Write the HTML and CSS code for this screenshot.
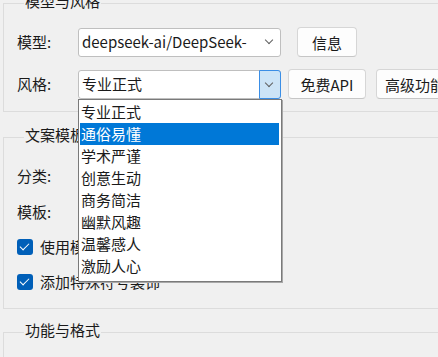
FILE: index.html
```html
<!DOCTYPE html>
<html lang="zh-CN">
    <head>
        <meta name="viewport" content="width=device-width, initial-scale=1">
        <link rel="stylesheet" href="styles.css">
        <title>文案生成</title>
    </head>
    <body>
        <div class="window">
            <fieldset class="group group-model">
                <legend>模型与风格</legend>
                <div class="row">
                    <label class="field-label">模型:</label>
                    <div class="combo">
                        <span class="combo-text">deepseek-ai/DeepSeek-</span>
                        <span class="combo-arrow"></span>
                    </div>
                    <button class="btn btn-info">信息</button>
                </div>
                <div class="row">
                    <label class="field-label">风格:</label>
                    <div class="combo combo-open">
                        <span class="combo-text">专业正式</span>
                        <span class="combo-arrow"></span>
                        <ul class="popup">
                            <li>专业正式</li>
                            <li class="selected">通俗易懂</li>
                            <li>学术严谨</li>
                            <li>创意生动</li>
                            <li>商务简洁</li>
                            <li>幽默风趣</li>
                            <li>温馨感人</li>
                            <li>激励人心</li>
                        </ul>
                    </div>
                    <button class="btn btn-api">免费API</button>
                    <button class="btn btn-more">高级功能</button>
                </div>
            </fieldset>

            <fieldset class="group group-template">
                <legend>文案模板</legend>
                <div class="row">
                    <label class="field-label">分类:</label>
                </div>
                <div class="row">
                    <label class="field-label">模板:</label>
                </div>
                <div class="row check-row">
                    <span class="checkbox"></span>
                    <span class="check-text">使用模板</span>
                </div>
                <div class="row check-row">
                    <span class="checkbox"></span>
                    <span class="check-text">添加特殊符号装饰</span>
                </div>
            </fieldset>

            <fieldset class="group group-format">
                <legend>功能与格式</legend>
                <div class="row"></div>
            </fieldset>
        </div>
    </body>
</html>
```

FILE: styles.css
```css
html, body {
    margin: 0;
    padding: 0;
    background: #f0f0f0;
    overflow: hidden;
}

body {
    color: #1a1a1a;
    font-family: "Noto Sans CJK SC", "Noto Sans", sans-serif;
    font-size: 15px;
    line-height: 20px;
}

.window {
    padding: 0 0 0 3px;
    width: 480px;
}

.group {
    border: 1px solid #dcdcdc;
    margin: 0;
    padding: 11px 0 0 13px;
    min-width: 0;
}

.group legend {
    margin-left: 7px;
    padding: 0 1px 5px;
    line-height: 20px;
}

.group-model {
    margin-top: -9px;
    padding-bottom: 12px;
}

.group-template {
    margin-top: 13px;
    padding-bottom: 11px;
}

.group-format {
    margin-top: 11px;
    height: 60px;
}

.row {
    display: flex;
    align-items: center;
    height: 30px;
}

.row + .row {
    margin-top: 12px;
}

.group-template .row + .row {
    margin-top: 6px;
}

.group-template .check-row + .check-row,
.group-template .row + .check-row {
    margin-top: 5px;
}

.field-label {
    width: 61px;
    flex: none;
}

.combo {
    position: relative;
    box-sizing: border-box;
    width: 203px;
    height: 29px;
    background: #fff;
    border: 1px solid #bfbfbf;
    border-radius: 3px;
    display: flex;
    align-items: center;
    flex: none;
}

.combo-text {
    padding-left: 3px;
    flex: 1;
    white-space: nowrap;
    overflow: hidden;
}

.combo-arrow {
    width: 20px;
    align-self: stretch;
    position: relative;
    flex: none;
}

.combo-arrow::after {
    content: "";
    position: absolute;
    left: 6px;
    top: 8px;
    width: 5px;
    height: 5px;
    border-right: 1px solid #606060;
    border-bottom: 1px solid #606060;
    transform: rotate(45deg);
}

.combo-open .combo-arrow {
    margin: -1px -1px -1px 0;
    background: #cce4f7;
    border: 1px solid #3a8ee6;
    border-radius: 0 3px 3px 0;
}

.combo-open .combo-arrow::after {
    left: 6px;
    top: 9px;
}

.btn {
    box-sizing: border-box;
    height: 30px;
    background: #fdfdfd;
    border: 1px solid #d6d6d6;
    border-bottom-color: #c6c6c6;
    border-radius: 4px;
    color: #1a1a1a;
    font-family: inherit;
    font-size: 15px;
    padding: 0;
    flex: none;
}

.btn-info {
    width: 60px;
    margin-left: 16px;
}

.btn-api {
    width: 78px;
    margin-left: 7px;
}

.btn-more {
    width: 78px;
    margin-left: 10px;
}

.popup {
    position: absolute;
    left: -1px;
    top: 28px;
    width: 204px;
    box-sizing: border-box;
    margin: 0;
    padding: 1px 1px 4px;
    list-style: none;
    background: #fff;
    border: 1px solid #7a7a7a;
    box-shadow: 1px 1px 0 #a8a8a8;
    z-index: 10;
}

.popup li {
    height: 22px;
    line-height: 22px;
    padding-left: 1px;
    margin-right: 1px;
}

.popup li.selected {
    background: #0078d7;
    color: #fff;
}

.checkbox {
    position: relative;
    width: 16px;
    height: 16px;
    border-radius: 3px;
    background: #005fb8;
    flex: none;
    margin-right: 7px;
}

.checkbox::after {
    content: "";
    position: absolute;
    left: 5px;
    top: 2px;
    width: 4px;
    height: 8px;
    border-right: 1.5px solid #fff;
    border-bottom: 1.5px solid #fff;
    transform: rotate(45deg);
}
```
